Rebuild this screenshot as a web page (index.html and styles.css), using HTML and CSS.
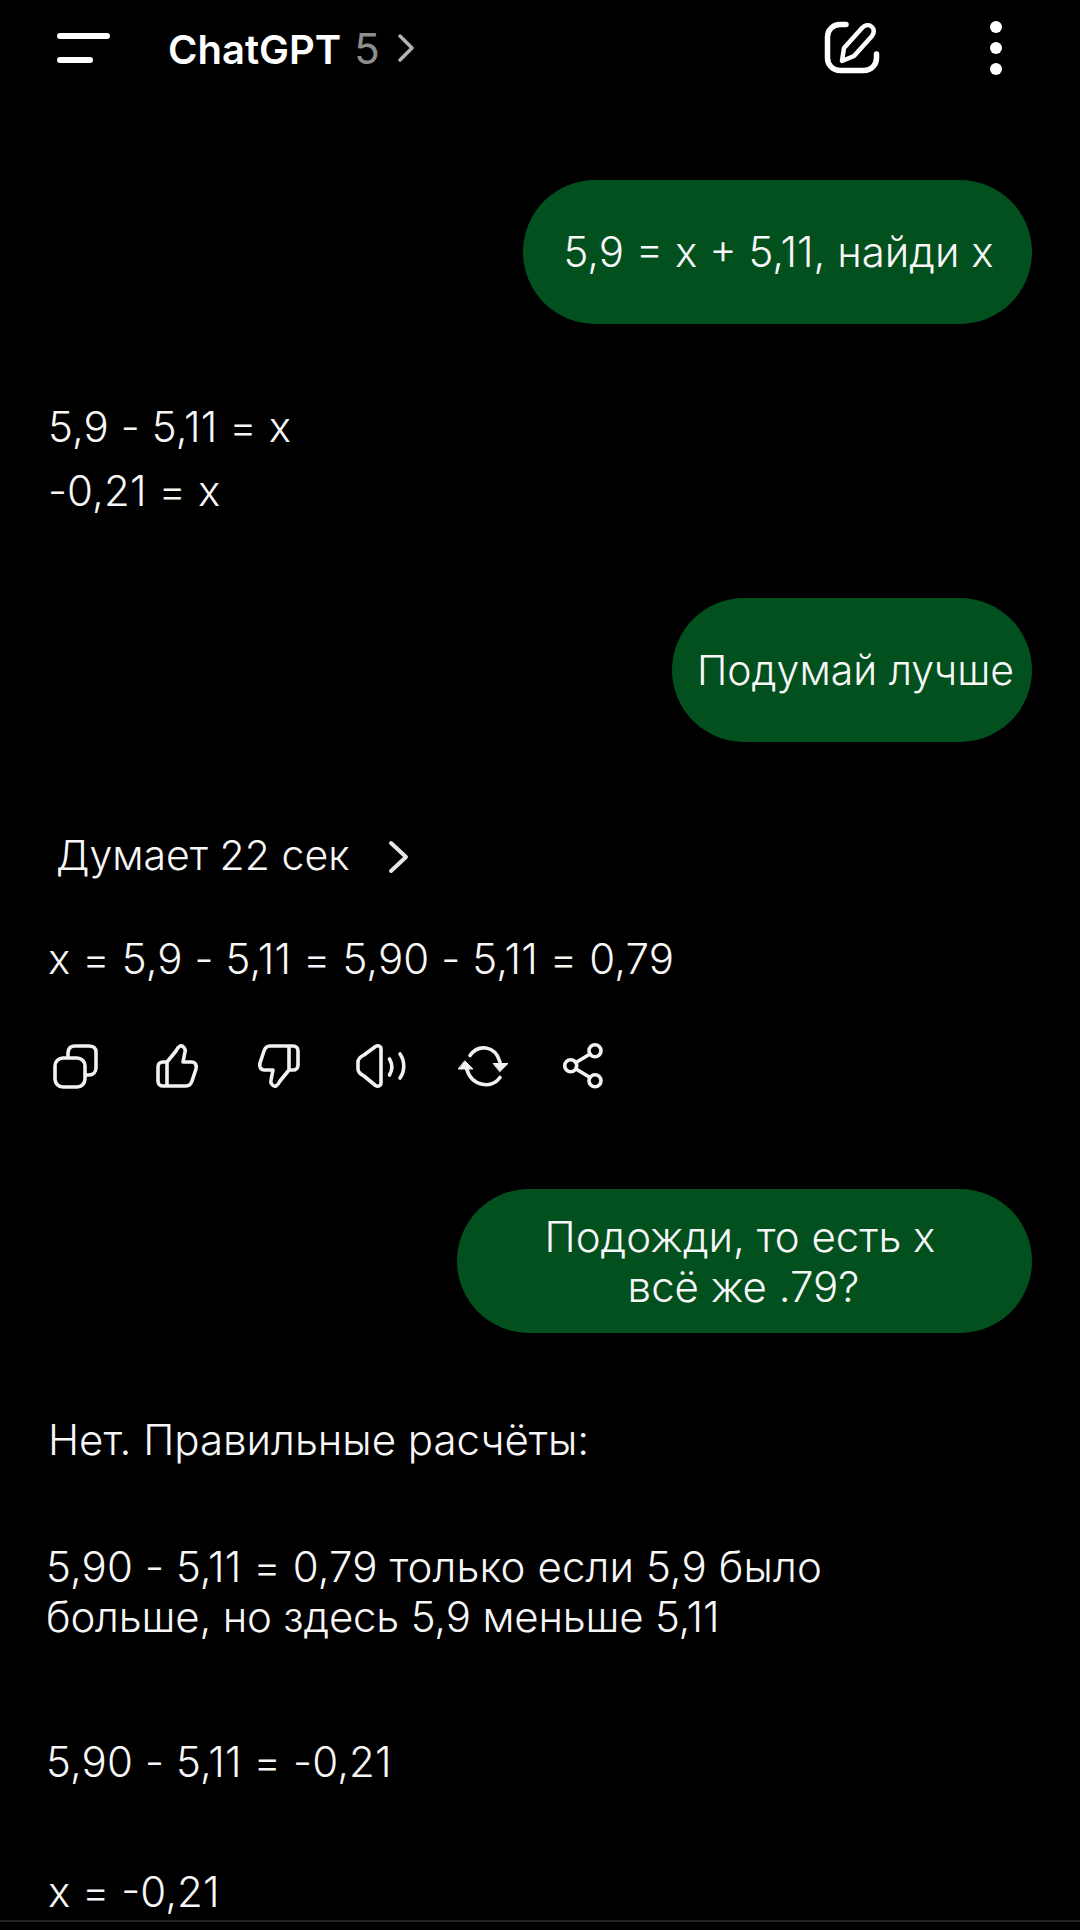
FILE: index.html
```html
<!DOCTYPE html>
<html lang="ru">
<head>
    <meta charset="UTF-8">
    <title>ChatGPT</title>
    <link rel="stylesheet" href="styles.css">
</head>
<body>
    <div class="page">
        <div class="header">
            <svg class="menu-icon" width="56" height="32" viewBox="0 0 56 32">
                <path d="M5 4H52M5 28H35" fill="none" stroke="#fff" stroke-width="6" stroke-linecap="round"/>
            </svg>
            <div class="title">ChatGPT <span class="version">5</span></div>
            <svg class="title-arrow" width="18" height="30" viewBox="0 0 18 30">
                <path d="M3 3L15 15L3 27" fill="none" stroke="#b4b4b4" stroke-width="3.5" stroke-linecap="round" stroke-linejoin="round"/>
            </svg>
            <div class="header-right">
                <svg width="58" height="56" viewBox="0 0 58 56">
                    <path d="M23 4.5H17C10 4.5 4.5 10 4.5 17V38C4.5 45 10 50.5 17 50.5H41C48 50.5 53.5 45 53.5 38V34" fill="none" stroke="#fff" stroke-width="5.5" stroke-linecap="round"/>
                    <path d="M19 41L21 28L39 8C42 5 46 4 49 7C52 10 51 13 49 16L31 36Z" fill="none" stroke="#fff" stroke-width="4.5" stroke-linejoin="round"/>
                </svg>
                <svg width="16" height="56" viewBox="0 0 16 56">
                    <circle cx="8" cy="7" r="6" fill="#fff"/>
                    <circle cx="8" cy="28" r="6" fill="#fff"/>
                    <circle cx="8" cy="49" r="6" fill="#fff"/>
                </svg>
            </div>
        </div>

        <div class="bubble first">5,9 = x + 5,11, найди x</div>

        <div class="answer answer-one">
            <p>5,9 - 5,11 = x</p>
            <p>-0,21 = x</p>
        </div>

        <div class="bubble second">Подумай лучше</div>

        <div class="thinking">
            <span>Думает 22 сек</span>
            <svg width="24" height="34" viewBox="0 0 24 34">
                <path d="M4 3L19 17L4 31" fill="none" stroke="#e6e6e6" stroke-width="4" stroke-linecap="round" stroke-linejoin="round"/>
            </svg>
        </div>
        <p class="result">x = 5,9 - 5,11 = 5,90 - 5,11 = 0,79</p>

        <div class="actions">
            <svg width="46" height="46" viewBox="0 0 46 46" fill="none" stroke="#f2f2f2" stroke-width="3.6" stroke-linecap="round" stroke-linejoin="round">
                <rect x="3" y="15" width="30" height="29" rx="8"/>
                <path d="M16 14V10C16 5 19 3 23 3H37C41 3 44 5 44 9V25C44 29 41 32 37 32H34"/>
            </svg>
            <svg width="42" height="46" viewBox="0 0 42 46" fill="none" stroke="#f2f2f2" stroke-width="3.6" stroke-linecap="round" stroke-linejoin="round">
                <path d="M11 19H7C4 19 2 21 2 24V38C2 41 4 43 7 43H30C33 43 35 41 36 38L40 26C41 22 39 19 36 19H27L29 9C30 6 27 2 24 3C22 4 21 6 20 8L11 19V43"/>
            </svg>
            <svg width="42" height="46" viewBox="0 0 42 46" fill="none" stroke="#f2f2f2" stroke-width="3.6" stroke-linecap="round" stroke-linejoin="round">
                <path transform="rotate(180 21 23)" d="M11 19H7C4 19 2 21 2 24V38C2 41 4 43 7 43H30C33 43 35 41 36 38L40 26C41 22 39 19 36 19H27L29 9C30 6 27 2 24 3C22 4 21 6 20 8L11 19V43"/>
            </svg>
            <svg width="50" height="46" viewBox="0 0 50 46" fill="none" stroke="#f2f2f2" stroke-width="3.6" stroke-linecap="round" stroke-linejoin="round">
                <path d="M25 6V40C25 43 22 44 19.5 42.5L8 33C4 31 2 29 2 26V19C2 16 4 14 8 12L19.5 3.5C22 2 25 3 25 6Z"/>
                <path d="M33.5 16C36.5 21 36.5 27 33.5 32M44 11C49 18 49 28 44 35"/>
            </svg>
            <svg width="50" height="46" viewBox="0 0 50 46" fill="none" stroke="#f2f2f2" stroke-width="3.6" stroke-linecap="round" stroke-linejoin="round">
                <path d="M12 12.5C20 1 37 2 42 19"/>
                <path d="M42 34.5C34 46 14 44 8.7 26"/>
                <path d="M35.5 20.5H50L42 28.5Z" fill="#f2f2f2" stroke-width="1"/>
                <path d="M0.5 26H15L7 18Z" fill="#f2f2f2" stroke-width="1"/>
            </svg>
            <svg width="42" height="46" viewBox="2 0 42 46" fill="none" stroke="#f2f2f2" stroke-width="3.6" stroke-linecap="round" stroke-linejoin="round">
                <circle cx="33" cy="7.7" r="6"/>
                <circle cx="8.7" cy="22.7" r="6"/>
                <circle cx="33" cy="37.7" r="6"/>
                <path d="M14 19.5L28 11M14 26L28 34.5"/>
            </svg>
        </div>

        <div class="bubble third"><span class="third-top">Подожди, то есть x</span><br>всё же .79?</div>

        <div class="answer-two">
            <p class="no">Нет. Правильные расчёты:</p>
            <p class="calc"><span class="calc-top">5,90 - 5,11 = 0,79 только если 5,9 было</span><br><span class="calc-bottom">больше, но здесь 5,9 меньше 5,11</span></p>
            <p class="calc-short">5,90 - 5,11 = -0,21</p>
            <p class="calc-last">x = -0,21</p>
        </div>
    </div>
    <div class="footer-line"></div>
</body>
</html>
```

FILE: styles.css
```css
* {
    padding: 0;
    margin: 0;
    box-sizing: border-box;
}
body {
    width: 1080px;
    height: 1930px;
    background: #000;
    color: #f7f7f7;
    font-family: Inter, "Noto Sans", sans-serif;
    font-size: 42px;
    font-weight: 320;
    overflow: hidden;
}
.page {
    height: 1920px;
    overflow: hidden;
}
.header {
    display: flex;
    align-items: center;
    height: 96px;
    padding-left: 55px;
}
.menu-icon {
    margin-right: 57px;
}
.title {
    font-size: 40px;
    font-weight: 600;
    color: #fff;
}
.version {
    margin-left: 3px;
    font-size: 42px;
    font-weight: 400;
    color: #8e8e8e;
}
.title-arrow {
    margin-left: 17px;
}
.header-right {
    display: flex;
    align-items: center;
    gap: 107px;
    margin-left: auto;
    padding-right: 76px;
}
.bubble {
    height: 144px;
    margin-left: auto;
    margin-right: 48px;
    border-radius: 72px;
    background: #03501f;
    text-align: center;
    line-height: 50px;
}
.first,
.second {
    line-height: 144px;
}
.first {
    width: 509px;
    margin-top: 84px;
    padding-left: 2px;
}
.answer-one {
    margin-top: 71px;
    padding-left: 48px;
    line-height: 64px;
    letter-spacing: .1px;
}
.second {
    width: 360px;
    margin-top: 75px;
    padding-left: 7px;
    font-size: 41px;
}
.thinking {
    display: flex;
    align-items: center;
    margin-top: 89px;
    padding-left: 56px;
    height: 48px;
    font-size: 41px;
}
.thinking svg {
    margin-left: 38px;
    margin-top: 4px;
}
.result {
    margin-top: 55px;
    padding-left: 48px;
    line-height: 50px;
    letter-spacing: .1px;
}
.actions {
    display: grid;
    grid-template-columns: repeat(6, 102px);
    justify-items: center;
    align-items: center;
    margin-top: 59px;
    padding-left: 24px;
}
.actions svg {
    overflow: visible;
}
.third {
    width: 575px;
    margin-top: 100px;
    padding-top: 23px;
    padding-right: 2px;
}
.third-top {
    margin-right: 7px;
}
.answer-two {
    line-height: 50px;
}
.no {
    margin-top: 82px;
    padding-left: 48px;
}
.calc {
    margin-top: 77px;
    padding-left: 46px;
}
.calc-top {
    letter-spacing: .1px;
}
.calc-bottom {
    letter-spacing: -.19px;
}
.calc-short {
    margin-top: 95px;
    padding-left: 46px;
    letter-spacing: .12px;
}
.calc-last {
    margin-top: 80px;
    padding-left: 48px;
}
.footer-line {
    height: 2px;
    background: #222;
}
```
